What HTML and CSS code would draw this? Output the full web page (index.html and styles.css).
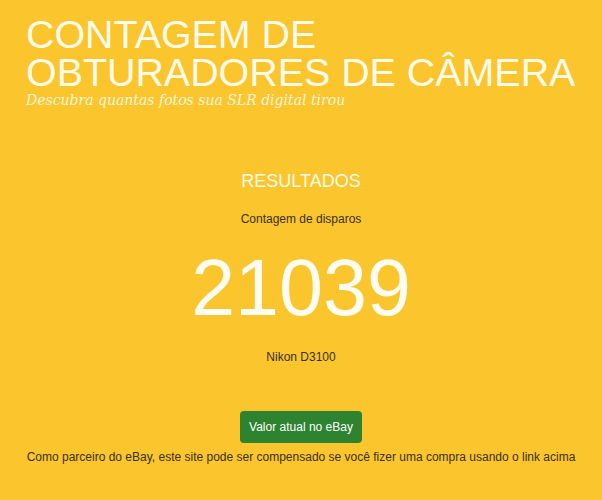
FILE: index.html
```html
<!DOCTYPE html>
<html lang="pt">
<head>
    <meta charset="UTF-8">
    <meta name="viewport" content="width=device-width, initial-scale=1.0">
    <title>Contagem de obturadores de câmera</title>
    <link rel="stylesheet" href="styles.css">
</head>
<body>
    <!-- Header -->
    <header class="site-header">
        <h1>CONTAGEM DE<br>OBTURADORES DE CÂMERA</h1>
        <p class="tagline">Descubra quantas fotos sua SLR digital tirou</p>
    </header>

    <!-- Results -->
    <main class="results">
        <h2>RESULTADOS</h2>
        <p class="label">Contagem de disparos</p>
        <div class="count">21039</div>
        <p class="model">Nikon D3100</p>

        <a href="#" class="ebay-button">Valor atual no eBay</a>
        <p class="disclaimer">Como parceiro do eBay, este site pode ser compensado se você fizer uma compra usando o link acima</p>
    </main>
</body>
</html>
```

FILE: styles.css
```css
/* Global Styles */
body, html {
    margin: 0;
    padding: 0;
    background: #fac52d;
    font-family: 'Liberation Sans', Arial, sans-serif;
    color: #3a3020;
}

/* Header */
.site-header {
    padding: 15px 0 0 26px;
}

.site-header h1 {
    margin: 0;
    font-size: 39.4px;
    font-weight: normal;
    line-height: 38px;
    white-space: nowrap;
    color: #fffbea;
}

.tagline {
    margin: 2px 0 0;
    font-family: 'DejaVu Serif', Georgia, serif;
    font-style: italic;
    font-size: 14px;
    line-height: 15px;
    color: #fff6dc;
}

/* Results */
.results {
    text-align: center;
    padding-top: 63px;
}

.results h2 {
    margin: 0;
    font-size: 18px;
    font-weight: normal;
    color: #fffbea;
}

.label {
    margin: 20px 0 0;
    font-size: 12px;
}

.count {
    margin-top: 22px;
    font-size: 79px;
    line-height: 80px;
    color: #fffdf2;
}

.model {
    margin: 22px 0 0;
    font-size: 12px;
}

.ebay-button {
    display: inline-block;
    margin-top: 47px;
    padding: 9px 9px;
    line-height: 14px;
    background: #2d832f;
    color: #fff;
    font-size: 12px;
    text-decoration: none;
    border-radius: 4px;
}

.disclaimer {
    margin: 7px 0 0;
    font-size: 12px;
}
```
